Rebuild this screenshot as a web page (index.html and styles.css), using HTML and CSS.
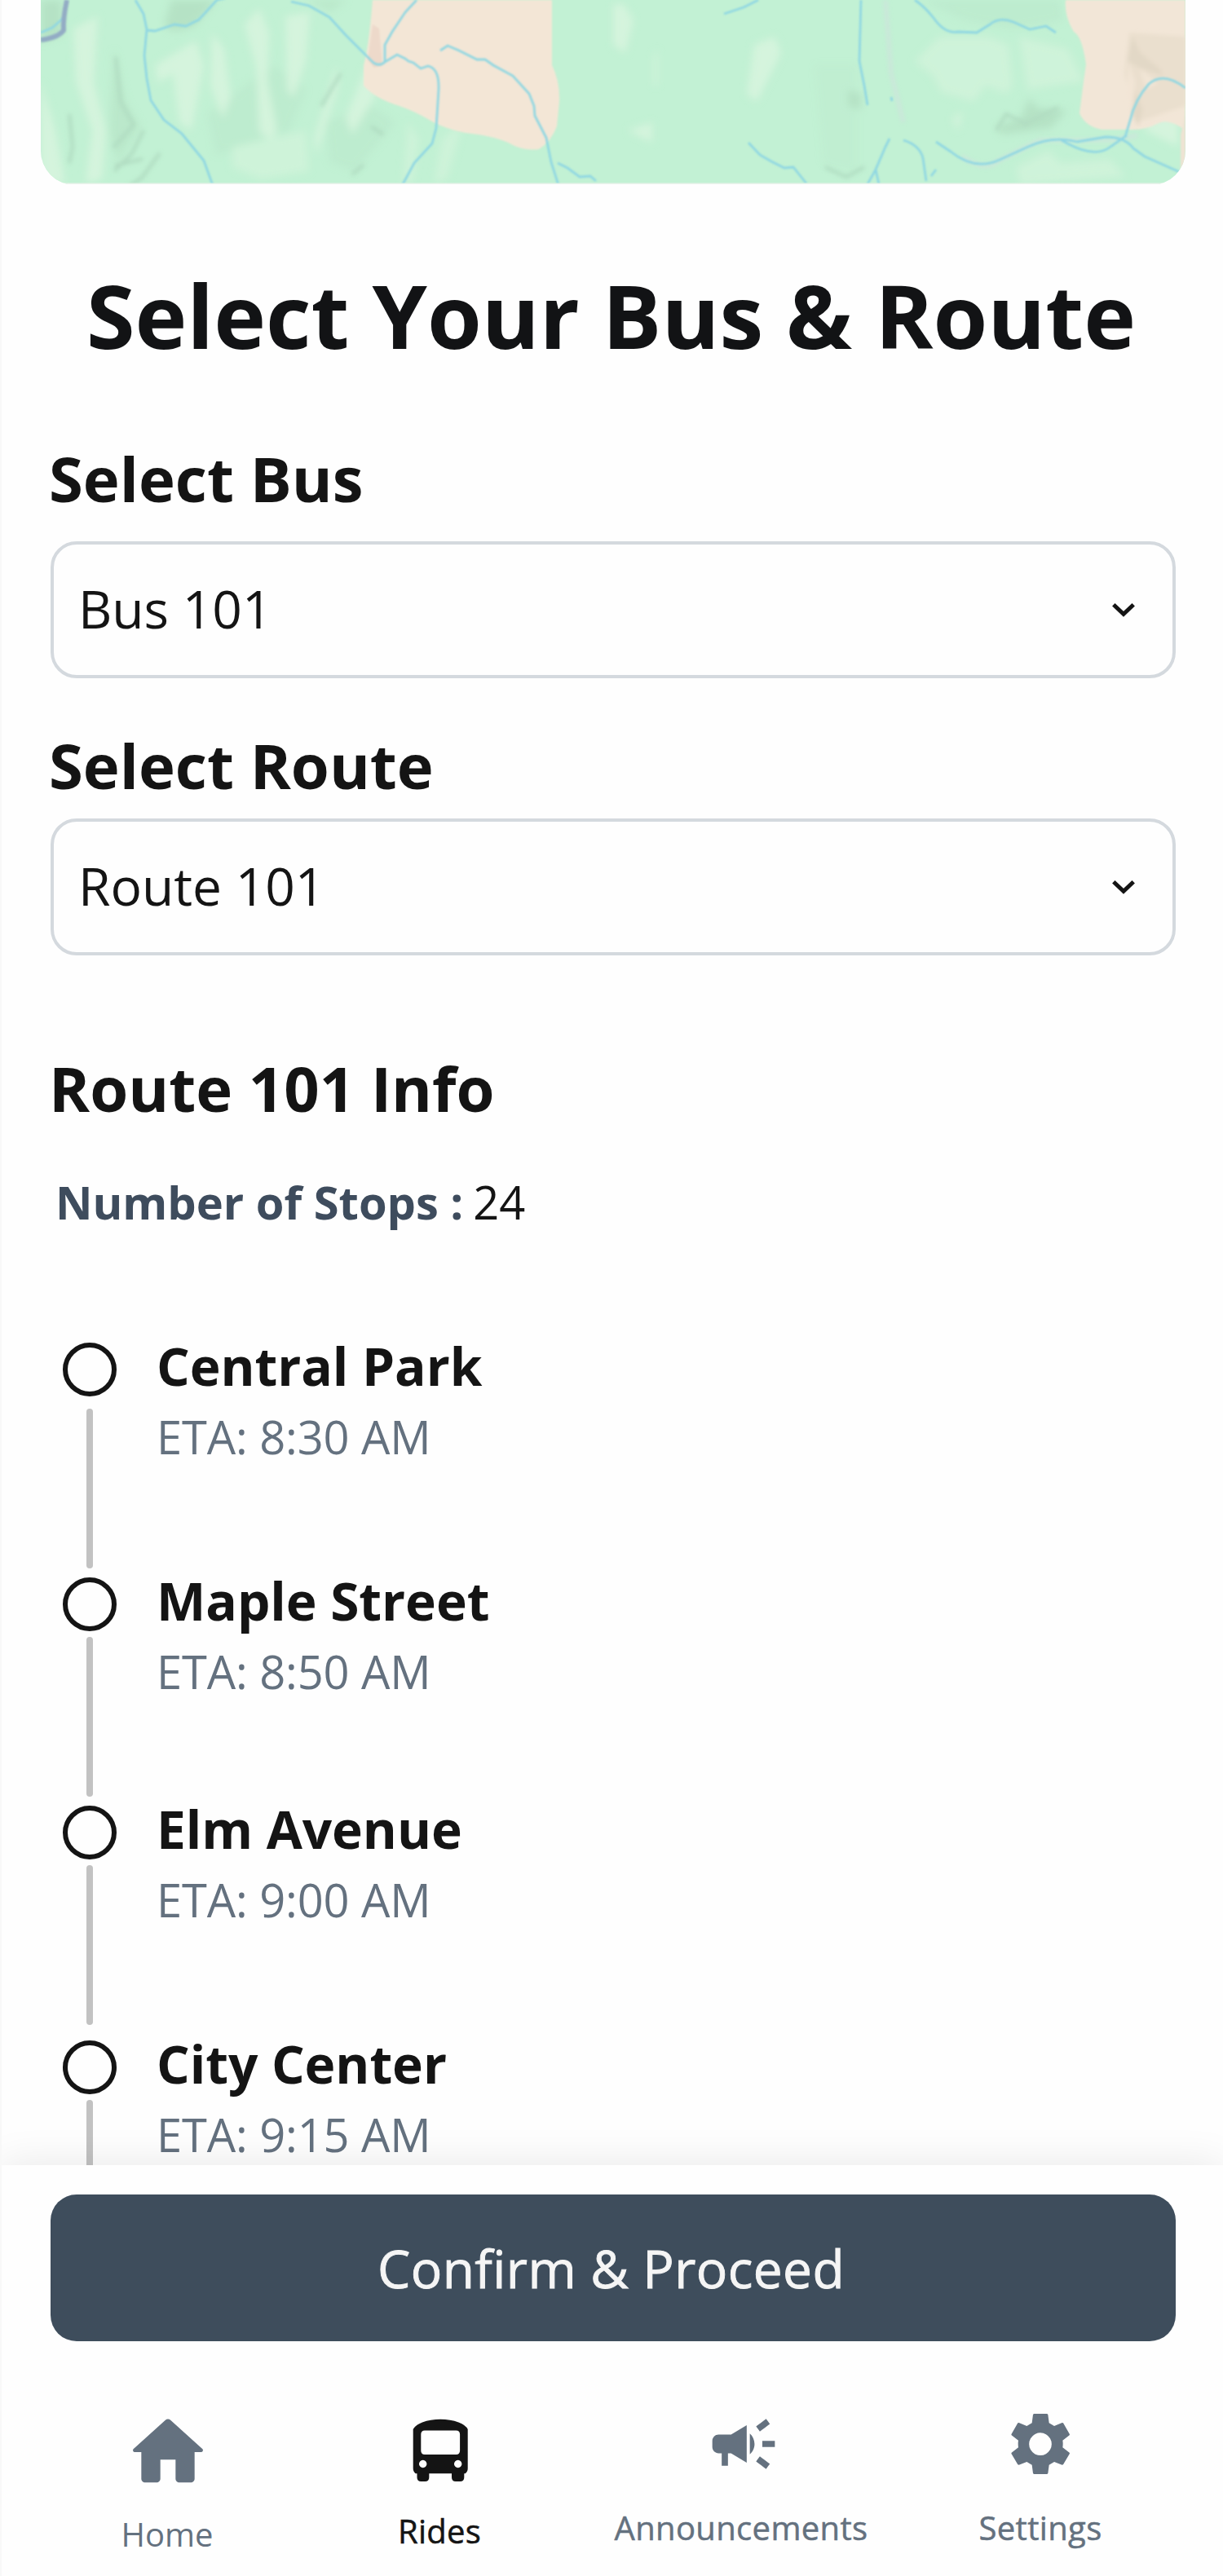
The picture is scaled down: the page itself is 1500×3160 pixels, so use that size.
FILE: index.html
```html
<!DOCTYPE html>
<html lang="en">
<head>
<meta charset="utf-8">
<title>Select Your Bus &amp; Route</title>
<link rel="stylesheet" href="styles.css">
</head>
<body>
<div class="screen">
  <main class="content">
    <div class="map">
      <svg viewBox="50 0 1404 226" width="1404" height="226">
        <defs>
          <filter id="soft" x="-20%" y="-20%" width="140%" height="140%"><feGaussianBlur stdDeviation="5"/></filter>
          <filter id="fold" x="-20%" y="-20%" width="140%" height="140%"><feGaussianBlur stdDeviation="2.5"/></filter>
          <filter id="edge"><feGaussianBlur stdDeviation="0.8"/></filter>
        </defs>
        <rect x="50" width="1404" height="226" fill="#c2f1d4"/>
        <g filter="url(#soft)">
          <g fill="#b5e2c5">
            <path d="M50 0h26v42l-26 10zM210 0h55l-25 30q-30 15-38 0z"/>
            <path d="M140 60l14 65 18 30-28 45-10-40zM375 0h50l-20 14z" opacity=".6"/>
            <path d="M1222 155l30-10 10-24 12 12 35 2-20 22-60 8zM1336 125l40 8-5 12-35-5zM1040 110l16 5v20l-16-5z"/>
            <path d="M1000 80h50v130l-40-10z" opacity=".18"/>
            <path d="M255 140l80-60 40 30-20 50-90 30zM1130 0h170l4 25-60 10-60-10zM400 150l55-20 30 20-50 60-30-10z" opacity=".35"/>
          </g>
          <g fill="#d8f5de" opacity=".85">
            <path d="M90 35l30-15-5 80 15 60-5 60-20 5 8-65-20-60zM190 80l50-30 10 30-15 80-15-10-8-60-18 12zM260 40l15 20 8 60-10 25-15-40zM300 30l18-20 12 30-2 60 12 60-8 12-14-10-4-80zM350 20l30-5-5 60-15 45-8-10zM388 190l27-85-2-25-28 90zM450 80l12 35-30 50-8-20zM50 100l18 60 12 65H50z"/>
            <path d="M285 180l90-20 4 50-60 10-34-15zM500 150l14 20-8 55h-12zM568 150l-20 70-16 5 10-55z" opacity=".6"/>
            <path d="M1122 75l30-30h60l25 10 5 50-8 10-25-10-15 20-40-12-10-20zM1250 45l60 15 20 40-70 10zM1246 205l40-20 15 15 60-5 20 22-130 10z" opacity=".65"/>
            <path d="M765 5l12 20-10 40-15-10V5zM925 55l25-10 8 20-30 60-12-10zM770 160l30-10v25zM1405 110l40 10v60l-40-20zM806 60v45h-4V70zM1168 145l12-8-5 24z"/>
          </g>
        </g>
        <g fill="none" stroke="#b0dcc1" stroke-width="4" filter="url(#fold)">
          <path d="M142 70l6 55 16 28-25 28M176 160l-14 28-22 22M196 188l-22 30-20 14M175 195l-34 8M85 140l4 40-4 20M455 155l15 10M446 202l-14 12M1222 160l12-20 24 12 40-20M1012 205l26 12 22-12M418 90l-24 40"/>
        </g>
        <g filter="url(#edge)">
          <path d="M457 0h220v80q10 20 9 45l-3 30q-8 20-22 28-15 2-30-4-20-12-60-16-25-5-41-14-20-12-40-19-30-9-44-25v-25q6-20 11-80z" fill="#f3e6d6"/>
          <path d="M457 30l8 5 4 45-10 3-8-10z" fill="#edd9ca"/>
          <path d="M1307 0h147v160q-20-15-33-9-15 8-30 8h-40q-20-4-27-20 5-40 8-60-5-35-15-40-12-20-10-39z" fill="#f2e6d7"/>
          <path d="M1454 140v60l-6 15V165z" fill="#eee3d3"/>
        </g>
        <g filter="url(#fold)">
          <path d="M1385 40l69 5v85l-60 20-15-60z" fill="#eadfce"/>
          <path d="M1389 45l10 20 24 20 4 8-30-10-14-8zM1392 110l10 25-6 20-8-15z" fill="#e2d8c6"/>
          <path d="M1398 84l22 18-14 8zM1384 75l8 25-2 30-8-10z" fill="#f2e5d6"/>
        </g>
        <g fill="none" stroke="#cee4dc" stroke-width="4" filter="url(#fold)">
          <path d="M1086 0l7 90 15 60M1180 192q30 20 45 5l50-25h90l30-6"/>
        </g>
        <g fill="none" stroke="#90d7e2" stroke-width="2.8" filter="url(#edge)">
          <path d="M50 40l14-6 14-12"/>
          <path d="M166 0l10 17 4 19-3 32 3 28 5 27 16 24 22 17 27 33 13 36 8 20v22M180 37l10 1 24-8 14 2 16-8 22-24 10-2"/>
          <path d="M357 2l22 5 25 14 20 22 20 20 14 14q8 5 14-1l15-9 10 5 4 3 6 2 9 7 9-3q14 3 13 29l-3 47-5 19-22 24-14 26-5 36-12 26M511 0l-14 15-16 24-9 16v22"/>
          <path d="M540 62l9-6 14 6 22 11h10l10 7 24 13 20 22 6 15 1 12 14 27 6 30 8 25 2 24M684 200l12 6 15 11 13-1 7 6"/>
          <path d="M888 17l24-8 18-9M1056 0l-2 75 6 30 4 24M1122 0q12 8 23 22 14 20 30 17l23 1 16-10q12-10 29-3l20 9 20-4 12 8M918 175l14 15 14 8 16 8 11-1 16 20M1091 170l-5 10-12 28 4 18M1074 208l-10 18M1108 172q20 6 24 22l4 28M1148 174l18 12q30 24 60 10l35-16q30-14 60-6l35-6q24 0 34 14l14 10 45 20 5 10M1380 168l6-20q6-26 23-45 18-16 45 5M1302 172q40 24 60 8l20-14"/>
          <path d="M1148 208l-6 8M1093 119l1 5"/>
        </g>
        <path d="M82 0q-5 24-4 37-6 9-28 12" fill="none" stroke="#93acc4" stroke-width="6" filter="url(#edge)"/>
        <path d="M50 226h1404" stroke="#ebf3ec" stroke-width="3"/>
      </svg>
    </div>
    <h1 class="title">Select Your Bus &amp; Route</h1>
    <section class="field">
      <h2 class="heading">Select Bus</h2>
      <div class="select select-bus"><span>Bus 101</span><svg class="chevron" viewBox="0 0 28 17"><path d="M1.800 1.800L14 13.300 26.200 1.800" fill="none" stroke="#141414" stroke-width="5"/></svg></div>
    </section>
    <section class="field field-route">
      <h2 class="heading">Select Route</h2>
      <div class="select select-route"><span>Route 101</span><svg class="chevron" viewBox="0 0 28 17"><path d="M1.800 1.800L14 13.300 26.200 1.800" fill="none" stroke="#141414" stroke-width="5"/></svg></div>
    </section>
    <section class="info">
      <h2 class="heading">Route 101 Info</h2>
      <p class="count"><b>Number of Stops :</b><span>24</span></p>
    </section>
    <ol class="stops">
      <li class="stop first"><div class="rail"><i class="dot"></i><i class="line"></i></div><div class="text"><b>Central Park</b><span>ETA: 8:30 AM</span></div></li>
      <li class="stop short"><div class="rail"><i class="dot"></i><i class="line"></i></div><div class="text"><b>Maple Street</b><span>ETA: 8:50 AM</span></div></li>
      <li class="stop"><div class="rail"><i class="dot"></i><i class="line"></i></div><div class="text"><b>Elm Avenue</b><span>ETA: 9:00 AM</span></div></li>
      <li class="stop"><div class="rail"><i class="dot"></i><i class="line"></i></div><div class="text"><b>City Center</b><span>ETA: 9:15 AM</span></div></li>
    </ol>
  </main>
  <footer class="footer">
    <button class="confirm">Confirm &amp; Proceed</button>
    <nav class="nav">
      <a class="tab home"><svg viewBox="0 0 24 24"><path d="M10 19v-5h4v5c0 .55.45 1 1 1h3c.55 0 1-.45 1-1v-7h1.7c.46 0 .68-.57.33-.87L12.67 3.6c-.38-.34-.96-.34-1.34 0l-8.36 7.53c-.34.3-.13.87.33.87H5v7c0 .55.45 1 1 1h3c.55 0 1-.45 1-1z"/></svg><span>Home</span></a>
      <a class="tab rides"><svg viewBox="500 2960 80 90"><path fill-rule="evenodd" d="M506.700 2980Q509 2975 518 2971.500Q528 2967.800 540.200 2967.800T562.400 2971.500Q571.400 2975 573.700 2980V3028q0 4-3 6.300h-1.400V3039q0 5-5 5h-5.300q-5 0-5-5v-4.700H526.300V3039q0 5-5 5H516.500q-5 0-5-5v-4.700H509.700q-3-2.300-3-6.300zM521 2981.600q-4.700 0-4.700 4.700v19.900q0 4.700 4.700 4.700h38.400q4.700 0 4.700-4.700v-19.900q0-4.700-4.700-4.700zM518.700 3017.800a4.700 4.700 0 1 0 .01 0zM561.700 3017.800a4.700 4.700 0 1 0 .01 0z"/></svg><span>Rides</span></a>
      <a class="tab news"><svg viewBox="0 0 24 24"><path d="M18 11v2h4v-2h-4zm-2 6.610c.96.71 2.210 1.650 3.200 2.390.4-.53.8-1.070 1.200-1.600-.99-.74-2.240-1.680-3.200-2.400-.4.54-.8 1.080-1.200 1.610zM20.400 5.600c-.4-.53-.8-1.070-1.200-1.600-.99.74-2.240 1.680-3.200 2.400.4.53.8 1.070 1.200 1.600.96-.72 2.210-1.650 3.200-2.400zM4 9c-1.100 0-2 .9-2 2v2c0 1.100.9 2 2 2h1v4h2v-4h1l5 3V6L8 9H4zm11.500 3c0-1.330-.58-2.530-1.500-3.350v6.690c.92-.81 1.500-2.010 1.500-3.340z"/></svg><span>Announcements</span></a>
      <a class="tab settings"><svg viewBox="0 0 360 360"><path fill-rule="evenodd" d="M156 69h49l3 3 4 31 19 11 29-12 4 1 24 42-1 3-25 19q2 12 0 26l25 19 1 3-24 41-4 1-29-11-19 11-4 31-3 3h-49l-3-3-4-31-19-11-29 11-4-1-24-41 1-3 25-19q-2-14 0-26l-25-19-1-3 24-42 4-1 29 12 19-11 4-31zM180 139a41.500 41.500 0 1 0 .01 0z"/></svg><span>Settings</span></a>
    </nav>
  </footer>
</div>
</body>
</html>
```
FILE: styles.css
```css
* { box-sizing: border-box; }
body { margin: 0; background: #fefefe; font-family: "Open Sans", sans-serif; color: #141414; }
h1, h2, p, ol { margin: 0; padding: 0; }
.screen { width: 1500px; height: 3160px; display: flex; flex-direction: column; overflow: hidden; border-left: 2px solid #f8f8f8; }
.content { height: 2656px; flex: none; overflow: hidden; display: flex; flex-direction: column; }
.map { width: 1404px; height: 227px; margin-left: 48px; border-radius: 0 0 42px 42px; overflow: hidden; flex: none; }
.map svg { display: block; }
.title { margin: 85px 3px 2px 0; height: 150px; line-height: 150px; font-size: 108px; font-weight: 700; text-align: center; color: #121315; white-space: nowrap; }
.heading { height: 100px; line-height: 94px; font-size: 76px; font-weight: 700; margin-left: 58px; white-space: nowrap; }
.field { margin-top: 76px; }
.field-route { margin-top: 60px; }
.select { width: 1380px; height: 168px; margin-left: 60px; border: 4px solid #d4d9de; border-radius: 32px; padding: 0 46px 0 30px; display: flex; align-items: center; justify-content: space-between; font-size: 64px; }
.select span { padding-bottom: 3px; }
.select-bus { margin-top: 24px; }
.select-route { margin-top: 12px; }
.chevron { width: 28px; height: 17px; }
.info { margin-top: 115px; }
.info .heading { line-height: 96px; }
.count { display: flex; gap: 12px; margin: 49px 0 0 66px; height: 80px; line-height: 76px; font-size: 56px; }
.count b { color: #3e4c5d; }
.stops { list-style: none; margin-top: 124px; }
.stop { display: flex; height: 288px; }
.stop.short { height: 280px; }
.rail { width: 80px; margin-left: 68px; display: flex; flex-direction: column; align-items: center; flex: none; }
.dot { width: 66.600px; height: 66.600px; margin-top: 6.700px; border: 6.700px solid #141414; border-radius: 50%; flex: none; }
.line { width: 8px; height: 196px; margin-top: 6.700px; background: #c2c2c2; border-radius: 4px; flex: none; }
.first .line { margin-top: 14.700px; }
.text { display: flex; flex-direction: column; margin-left: 42px; }
.text b { height: 86px; line-height: 72px; font-size: 64px; letter-spacing: -.05px; }
.text span { height: 76px; line-height: 72px; font-size: 56px; color: #64717f; letter-spacing: -.1px; }
.footer { position: relative; flex: none; height: 504px; background: #fefefe; box-shadow: 0 0 48px rgba(0, 0, 0, .095); padding: 36px 0 0 60px; }
.confirm { display: block; width: 1380px; height: 180px; padding: 0 5px 0 0; border: 0; border-radius: 32px; background: #3e4d5c; color: #f5f5f5; font: 500 64px "Open Sans", sans-serif; letter-spacing: .42px; -webkit-text-stroke: .9px #f5f5f5; }
.nav { display: flex; height: 288px; margin-left: -60px; }
.tab { display: flex; flex-direction: column; align-items: center; font-size: 40px; color: #64717f; fill: #64717f; white-space: nowrap; }
.tab svg { flex: none; }
.tab span { height: 54px; line-height: 54px; }
.home { width: 336px; margin-left: 36px; padding-top: 80px; }
.home svg { width: 112px; height: 112px; }
.home span { margin: 18px 2px 0 0; }
.rides { width: 336px; color: #141414; fill: #141414; margin-left: -3px; padding-top: 88px; }
.rides svg { width: 80px; height: 90px; margin-left: 2px; }
.rides span { margin-top: 28px; letter-spacing: .2px; -webkit-text-stroke: .5px #141414; }
.news { width: 336px; margin-left: 36px; padding-top: 80px; }
.news svg { width: 92px; height: 92px; margin-left: 2px; }
.news span { margin: 30px 4px 0 0; letter-spacing: .35px; }
.settings { width: 336px; margin-left: 30px; padding-top: 66px; }
.settings svg { width: 120px; height: 120px; margin-right: 3px; }
.settings span { margin: 16px 2px 0 0; letter-spacing: .35px; }
.news span, .settings span { -webkit-text-stroke: .5px #64717f; }
```
